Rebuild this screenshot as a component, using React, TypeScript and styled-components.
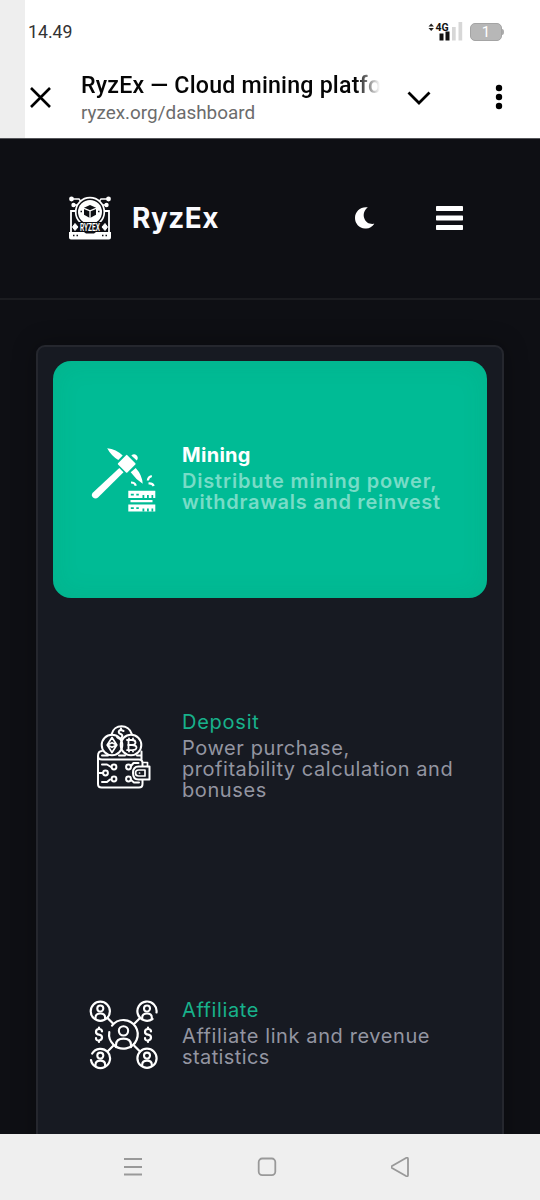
import React from 'react';
import styled, { createGlobalStyle } from 'styled-components';

const GlobalStyle = createGlobalStyle`
  * { box-sizing: border-box; }
  html, body { margin: 0; padding: 0; background: #0e0f14; }
  svg { display: block; flex: none; }
`;

const Screen = styled.div`
  width: 540px;
  height: 1200px;
  overflow: hidden;
  display: flex;
  flex-direction: column;
  background: #0e0f14;
  font-family: 'Inter', 'Liberation Sans', sans-serif;
`;

const BrowserTop = styled.div`
  height: 139px;
  flex: none;
  padding-left: 25px;
  border-bottom: 1px solid #55565a;
  background: linear-gradient(to right, #eeeeee 25px, #fff 25px);
  font-family: Roboto, sans-serif;
`;

const StatusBar = styled.div`
  height: 63px;
  padding: 0 36px 0 3px;
  display: flex;
  justify-content: space-between;
  align-items: center;
`;

const Clock = styled.span`
  font-size: 17.7px;
  color: #333;
`;

const StatusIcons = styled.div`
  display: flex;
  align-items: center;
  gap: 7px;
`;

const AddressBar = styled.div`
  height: 68px;
  display: flex;
  align-items: center;
  padding: 0 37px 0 4px;
`;

const PageInfo = styled.div`
  width: 302px;
  margin-left: 29px;
  padding-top: 3px;
`;

const PageTitle = styled.div`
  font-size: 23.2px;
  line-height: 29px;
  font-weight: 500;
  letter-spacing: 0.2px;
  white-space: nowrap;
  color: #050505;
  -webkit-mask-image: linear-gradient(to right, #000 275px, transparent 299px);
  mask-image: linear-gradient(to right, #000 275px, transparent 299px);
`;

const PageUrl = styled.div`
  font-size: 18.9px;
  line-height: 26px;
  color: #6c6c6c;
`;

const ChevronSlot = styled.div`
  margin-left: 24px;
  padding-top: 2px;
`;

const MenuSlot = styled.div`
  margin-left: auto;
`;

const SiteHeader = styled.header`
  height: 161px;
  flex: none;
  display: flex;
  align-items: center;
  padding: 0 76px 2px 68px;
  border-bottom: 2px solid #1b1c20;
`;

const BrandName = styled.span`
  margin-left: 20px;
  font-size: 28px;
  font-weight: 700;
  letter-spacing: 0.5px;
  color: #fafafe;
`;

const HeaderActions = styled.div`
  margin-left: auto;
  display: flex;
  align-items: center;
  gap: 61px;
`;

const Main = styled.main`
  flex: 1;
  min-height: 0;
  overflow: hidden;
  padding: 45px 36px 0;
`;

const Panel = styled.div`
  height: 860px;
  padding: 14px 15px;
  display: flex;
  flex-direction: column;
  gap: 30px;
  border: 2px solid #25272e;
  border-radius: 9px;
  background: #171a22;
  box-shadow: 0 0 24px rgba(0, 0, 0, 0.3);
`;

const Item = styled.section<{ $active?: boolean; $height: number }>`
  height: ${(p) => p.$height}px;
  flex: none;
  display: flex;
  align-items: center;
  padding: 0 0 0 36px;
  border-radius: 18px;
  background: ${(p) => (p.$active ? '#00bb95' : 'transparent')};
  box-shadow: ${(p) => (p.$active ? 'inset 0 0 26px rgba(20, 125, 80, 0.13)' : 'none')};
`;

const ItemText = styled.div`
  margin-left: 23px;
  padding-bottom: 3px;
`;

const ItemTitle = styled.div<{ $active?: boolean; $track: number }>`
  font-size: 20px;
  line-height: 24px;
  margin-bottom: 4px;
  font-weight: ${(p) => (p.$active ? 700 : 400)};
  letter-spacing: ${(p) => p.$track}px;
  color: ${(p) => (p.$active ? '#fff' : '#18b18b')};
`;

const ItemLine = styled.div<{ $active?: boolean; $track: number }>`
  font-size: 20px;
  line-height: 21px;
  white-space: nowrap;
  font-weight: ${(p) => (p.$active ? 600 : 400)};
  letter-spacing: ${(p) => p.$track}px;
  color: ${(p) => (p.$active ? '#78dcc7' : '#9395a1')};
`;

const SystemNav = styled.nav`
  height: 66px;
  flex: none;
  display: flex;
  align-items: center;
  gap: 114px;
  padding-left: 123px;
  background: #efefef;
`;

const SignalIcon = () => (
  <svg width="35" height="22" viewBox="0 1.5 35 22">
    <path d="M.5 7 3.200 4 5.900 7zM.5 8.500h5.400L3.200 11.500z" fill="#222" />
    <text x="7.500" y="11.300" fontSize="10.500" fontWeight="700" fontFamily="Roboto" fill="#111">4G</text>
    <path d="M11.500 14h4v7h-4zM17.500 12h4v9h-4z" fill="#111" />
    <path d="M24 7.500h3.700V21H24zM30.500 2.500h3.700V21h-3.700z" fill="#d7d7d7" />
  </svg>
);

const BatteryIcon = () => (
  <svg width="34" height="18" viewBox="0 0 34 18">
    <rect x=".5" y=".5" width="31" height="17" rx="4.500" fill="#b7b7b7" stroke="#a4a4a4" />
    <path d="M32 6q2 0 2 3t-2 3z" fill="#aaa" />
    <text x="16" y="14.200" textAnchor="middle" fontSize="15" fontFamily="Roboto" fill="#fff">1</text>
  </svg>
);

const LogoIcon = () => (
  <svg width="44" height="44" viewBox="0 0 44 44" fill="none" stroke="#fff">
    <path d="M5 3h6l4 5M7 9h6M39 3h-6l-4 5M37 9h-6" strokeWidth="1.500" />
    <g fill="#fff" stroke="none">
      <circle cx="3.500" cy="3" r="2.400" /><circle cx="5.500" cy="9" r="2.200" />
      <circle cx="40.500" cy="3" r="2.400" /><circle cx="38.500" cy="9" r="2.200" />
    </g>
    <path d="M7 15H3v21M37 15h4v21" strokeWidth="1.800" />
    <circle cx="22" cy="16" r="14.300" fill="#0e0f14" strokeWidth="1.700" />
    <circle cx="22" cy="16" r="12" fill="#fff" stroke="none" />
    <path d="m22 9 6 2.700v7L22 22l-6-3.300v-7z" fill="#0e0f14" stroke="none" />
    <path d="m16 12.300 6 2.500 6-2.500M22 14.800V22" strokeWidth="1.300" />
    <path d="M12.500 15.500H14M30 15.500h1.500" stroke="#0e0f14" strokeWidth="1.500" />
    <path d="M10 26h24l3 5-3 5H10l-3-5z" fill="#0e0f14" stroke="none" />
    <path d="m7 27.500 3 3.500-3 3.500-2.500-3.500zM37 27.500l2.500 3.500-2.500 3.500-3-3.500z" fill="#fff" stroke="#fff" strokeLinejoin="round" />
    <path d="M1 36h15l2 1.600h8l2-1.600h15v5.500q0 2-2 2H3q-2 0-2-2z" fill="#fff" stroke="none" />
    <path d="M5 39.500h1.500M8.500 39.500H10M34 39.500h1.500M37.500 39.500H39" stroke="#0e0f14" strokeWidth="1.500" />
    <text x="22" y="34.800" textAnchor="middle" textLength="20" lengthAdjust="spacingAndGlyphs" fontSize="10" fontWeight="600" fontFamily="Roboto" fill="#fff" stroke="none">RYZEX</text>
  </svg>
);

const MiningIcon = () => (
  <svg width="70" height="70" viewBox="0 0 70 70" fill="#fff">
    <path d="M18.200 3.200q9 1 15.500 7.300l-4.400 4.500Q22 10.500 18.200 3.200zM41.700 27.300l5-4.300q6.500 7 7 15.800-7-4.500-12-11.500z" />
    <path d="m37.700 10.800 8 8-8 8-8-8z" stroke="#fff" strokeWidth="1.800" strokeLinejoin="round" />
    <path d="M42.300 10.500q2.800-2.500 5.200-.2t.3 5.200z" />
    <path d="M30.300 23 34.500 27.200 9 52.500q-2.500 2.200-5 0t0-5z" />
    <path d="M42 37.500q4 0 4.800 3.300M58.800 35.500q.4-3.800 4-4.500M59.500 38.500q4-.4 5.200 2.500" fill="none" stroke="#fff" strokeWidth="2.200" />
    <path d="M39.300 45.800h27v7.200h-27zM41.500 55h22v2.200h-22zM39.300 59.400h27v7.200h-27z" />
    <path d="M41.800 48.700h3v1.700h-3zM47.300 48.700h2.500v1.700h-2.500zM53.500 50h1.800v3h-1.800zM58 50h1.800v3H58zM62.500 50h1.700v3h-1.700zM41.800 62.300h3V64h-3zM47.300 62.300h2.500V64h-2.500zM53.500 63.600h1.800v3h-1.800zM58 63.600h1.800v3H58zM62.500 63.600h1.700v3h-1.700z" fill="#00bb95" />
  </svg>
);

const DepositIcon = () => (
  <svg width="70" height="70" viewBox="0 0 70 70" fill="none" stroke="#fff" strokeWidth="2" strokeLinecap="round" strokeLinejoin="round">
    <path d="M22.500 12.500C25 1.500 40 1.500 43 12.500M34.500 9q-3.500-1.800-4.500 0t1.700 3 1 3.500-4.500-.2M32 6.500v1.800" />
    <circle cx="23" cy="23" r="10.300" /><circle cx="42" cy="23" r="10.300" />
    <path d="m23 15.500 4.800 7.500-4.800 7.500-4.800-7.500zM18.200 23l4.800-2.300 4.800 2.300-4.800 2.300z" strokeWidth="1.700" />
    <path d="M39 18h4q3.500 0 3.500 2.500T43 23h-4M43 23q4.500 0 4.500 2.600T43 28.100h-4M39.500 18v10M38 18h2M38 28.100h2M40 16.500V18M44 16.500V18M40 28.100v1.500M44 28.100v1.500" strokeWidth="1.800" />
    <path d="M13 29q-4 0-4 5v28q0 3.500 3.500 3.500H50q3.500 0 3.500-3.500v-5M9 34q0 3.500 4 3.500h37q3.500 0 3.500 3.500v3M13 33.500h6M30 33.500h6M48 33.500h4.500M52.500 29.500v8" />
    <path d="M49.500 44.500h11v13h-11q-5.500 0-5.500-6.500t5.500-6.500z" fill="#171a22" />
    <path d="M56 48v6h-6.500q-3 0-3-3t3-3zM58.500 44.500v-4h-4M50.500 51h.1" strokeWidth="1.700" />
    <path d="M9 51h5M13 42.500h5l4 2.500M13 60h5l3-2.500M49.500 41h-5L42 44M50 60.500h-5l-3-2.500" />
    <circle cx="16.500" cy="51" r="2.400" /><circle cx="25" cy="45" r="2.400" /><circle cx="25" cy="57" r="2.400" />
    <circle cx="39.500" cy="45" r="2.400" /><circle cx="39.500" cy="57" r="2.400" />
  </svg>
);

const Person = ({ x, y, scale = 1 }: { x: number; y: number; scale?: number }) => (
  <g transform={`translate(${x} ${y}) scale(${scale})`} strokeWidth={2.1 / scale}>
    <circle cy="-3" r="3" />
    <path d="M-4.800 7.500V6q0-4 4.800-4t4.800 4v1.500" />
  </g>
);

const AffiliateIcon = () => (
  <svg width="70" height="70" viewBox="0 0 70 70" fill="none" stroke="#fff" strokeWidth="2.200" strokeLinecap="round">
    <path d="M20.300 32A14.300 14.300 0 1 0 23 25.700" />
    <path d="m18.500 18 5.500 5.500M51 18l-5.500 5.500M18.500 51.500 24 46M51 51.500 45.500 46" />
    <circle cx="11.300" cy="11.200" r="9.600" />
    <path d="M67.500 12.500A9.600 9.600 0 1 0 63.500 19" />
    <path d="M2 60A9.600 9.600 0 1 0 3.200 53.500" />
    <circle cx="58" cy="58.300" r="9.600" />
    <Person x={11.3} y={11.5} /><Person x={58} y={11.5} />
    <Person x={11.3} y={58.6} /><Person x={58} y={58.6} />
    <Person x={34.5} y={35.5} scale={1.55} />
    <path d="M13 31.500q0-2.500-3-2.500t-3 2.700 3 3 3 2.900-3 2.900-3-2.500M10 27.500v1.500M10 40.500V42" />
    <path d="M62 31.500q0-2.500-3-2.500t-3 2.700 3 3 3 2.900-3 2.900-3-2.500M59 27.500v1.500M59 40.500V42" />
  </svg>
);

type Line = { text: string; track: number };
type Entry = { title: Line; lines: Line[]; height: number; active?: boolean; icon: React.ReactNode };

const entries: Entry[] = [
  {
    title: { text: 'Mining', track: 0.3 },
    lines: [{ text: 'Distribute mining power,', track: 0.82 }, { text: 'withdrawals and reinvest', track: 0.72 }],
    height: 237, active: true, icon: <MiningIcon />,
  },
  {
    title: { text: 'Deposit', track: 0.75 },
    lines: [{ text: 'Power purchase,', track: 0.6 }, { text: 'profitability calculation and', track: 0.55 }, { text: 'bonuses', track: 0.6 }],
    height: 258, icon: <DepositIcon />,
  },
  {
    title: { text: 'Affiliate', track: 0.6 },
    lines: [{ text: 'Affiliate link and revenue', track: 0.6 }, { text: 'statistics', track: 0.4 }],
    height: 237, icon: <AffiliateIcon />,
  },
];

export default function App() {
  return (
    <Screen>
      <GlobalStyle />
      <BrowserTop>
        <StatusBar>
          <Clock>14.49</Clock>
          <StatusIcons><SignalIcon /><BatteryIcon /></StatusIcons>
        </StatusBar>
        <AddressBar>
          <svg width="23" height="23" viewBox="0 0 23 23"><path d="m2 2 19 19M21 2 2 21" stroke="#000" strokeWidth="2.600" /></svg>
          <PageInfo>
            <PageTitle>RyzEx — Cloud mining platfo</PageTitle>
            <PageUrl>ryzex.org/dashboard</PageUrl>
          </PageInfo>
          <ChevronSlot>
            <svg width="24" height="14" viewBox="0 0 24 14"><path d="m1.500 1.500 10.500 10.500L22.500 1.500" fill="none" stroke="#000" strokeWidth="2.800" /></svg>
          </ChevronSlot>
          <MenuSlot>
            <svg width="8" height="26" viewBox="0 0 8 26"><circle cx="4" cy="4" r="3.200" /><circle cx="4" cy="13" r="3.200" /><circle cx="4" cy="22" r="3.200" /></svg>
          </MenuSlot>
        </AddressBar>
      </BrowserTop>
      <SiteHeader>
        <LogoIcon />
        <BrandName>RyzEx</BrandName>
        <HeaderActions>
          <svg width="20" height="22" viewBox="0 0 20 22"><path d="M12.800.3Q7.500 5 9 10.500c1.500 5.500 6 7 10.300 6.300C17 20.500 13.500 22 10 21.500 4 21 0 16.500 0 11 0 4 6-.8 12.800.3z" fill="#fff" /></svg>
          <svg width="28" height="24" viewBox="0 0 28 24" fill="#fff"><rect width="27" height="5" rx=".7" /><rect y="9.500" width="27" height="5" rx=".7" /><rect y="19" width="27" height="5" rx=".7" /></svg>
        </HeaderActions>
      </SiteHeader>
      <Main>
        <Panel>
          {entries.map((e) => (
            <Item key={e.title.text} $active={e.active} $height={e.height}>
              {e.icon}
              <ItemText>
                <ItemTitle $active={e.active} $track={e.title.track}>{e.title.text}</ItemTitle>
                {e.lines.map((l) => (
                  <ItemLine key={l.text} $active={e.active} $track={l.track}>{l.text}</ItemLine>
                ))}
              </ItemText>
            </Item>
          ))}
        </Panel>
      </Main>
      <SystemNav>
        <svg width="20" height="20" viewBox="0 0 20 20"><path d="M1 2h18M1 10h18M1 17.500h18" stroke="#999" strokeWidth="1.800" /></svg>
        <svg width="20" height="20" viewBox="0 0 20 20"><rect x="1.700" y="1.500" width="16.600" height="16.600" rx="3.500" fill="none" stroke="#999" strokeWidth="1.800" /></svg>
        <svg width="20" height="20" viewBox="0 0 20 20"><path d="m0 9 14-8q2-1 2 1v16q0 2-2 1L0 11q-1.500-1 0-2z" transform="translate(1)" fill="none" stroke="#999" strokeWidth="1.800" /></svg>
      </SystemNav>
    </Screen>
  );
}
